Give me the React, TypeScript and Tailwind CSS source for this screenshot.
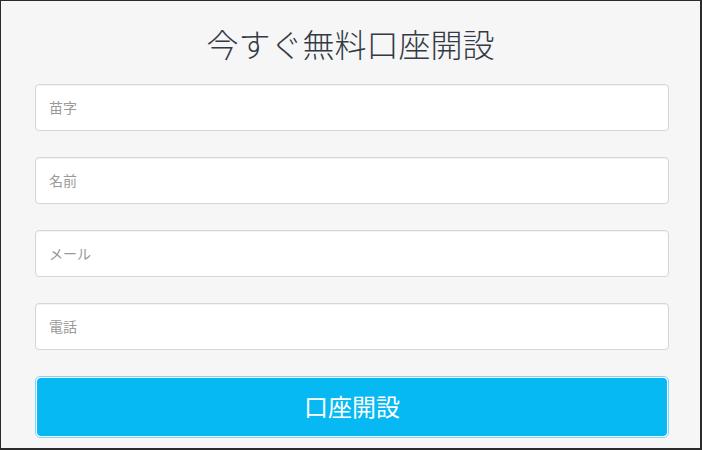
const fields = ["苗字", "名前", "メール", "電話"];

export default function App() {
  return (
    <div
      className="w-[702px] h-[450px] bg-[#f6f6f6] border-l border-t border-r-2 border-b-2 border-[#2b2b2b] overflow-hidden"
      style={{ fontFamily: '"Noto Sans", "Noto Sans CJK JP", sans-serif' }}
    >
      <h1 className="pt-[27px] h-[60px] text-center text-[32px] font-light leading-[34px] text-[#333a45]">
        今すぐ無料口座開設
      </h1>
      <form className="ml-[34px] mt-[23px] w-[634px] flex flex-col gap-[26px]">
        {fields.map((f) => (
          <input
            key={f}
            type="text"
            placeholder={f}
            className="h-[47px] w-full rounded-[4px] border border-[#d6d6d6] bg-white px-[13px] text-[14px] text-[#333] placeholder:text-[#9a9a9a] shadow-[inset_0_1px_1px_rgba(0,0,0,0.05)] outline-none"
          />
        ))}
        <div className="h-[62px] rounded-[5px] border border-[#7fd6f7] bg-white p-[1px]">
          <button
            type="button"
            className="h-full w-full rounded-[4px] bg-[#06b9f2] text-[24px] text-white"
          >
            口座開設
          </button>
        </div>
      </form>
    </div>
  );
}
